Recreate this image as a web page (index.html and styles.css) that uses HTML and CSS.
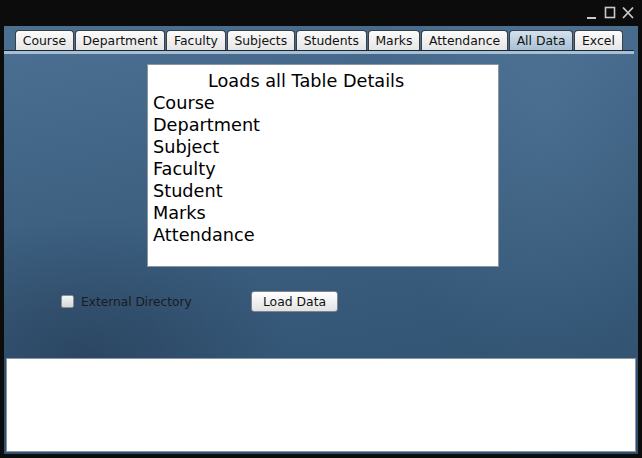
FILE: index.html
```html
<!DOCTYPE html>
<html>
<head>
<meta charset="utf-8">
<link rel="stylesheet" href="styles.css">
</head>
<body>
<div class="titlebar">
  <div class="winctl">
    <svg width="50" height="14" viewBox="0 0 50 14">
      <rect x="1" y="11" width="9" height="2" fill="#c9c9c9"/>
      <rect x="19.5" y="1.5" width="9" height="10" fill="none" stroke="#c9c9c9" stroke-width="1.6"/>
      <path d="M37 1.5 L47 12 M47 1.5 L37 12" stroke="#c9c9c9" stroke-width="1.8"/>
    </svg>
  </div>
</div>
<div class="window">
  <div class="tabs">
    <div class="tab">Course</div>
    <div class="tab">Department</div>
    <div class="tab">Faculty</div>
    <div class="tab">Subjects</div>
    <div class="tab">Students</div>
    <div class="tab">Marks</div>
    <div class="tab">Attendance</div>
    <div class="tab active">All Data</div>
    <div class="tab">Excel</div>
  </div>
  <div class="tabline"></div>
  <div class="content">
    <div class="panel">
      <div class="ptitle">Loads all Table Details</div>
      <div class="pitem">Course</div>
      <div class="pitem">Department</div>
      <div class="pitem">Subject</div>
      <div class="pitem">Faculty</div>
      <div class="pitem">Student</div>
      <div class="pitem">Marks</div>
      <div class="pitem">Attendance</div>
    </div>
    <div class="controls">
      <label class="check"><span class="box"></span><span class="clabel">External Directory</span></label>
      <div class="button">Load Data</div>
    </div>
  </div>
  <div class="output"></div>
</div>
</body>
</html>
```

FILE: styles.css
```css
html, body {
  margin: 0;
  padding: 0;
}
body {
  width: 642px;
  height: 458px;
  background: #0c0c0c;
  font-family: "DejaVu Sans", sans-serif;
  overflow: hidden;
}
.titlebar {
  height: 26px;
  display: flex;
  justify-content: flex-end;
  align-items: flex-start;
}
.winctl {
  padding: 6px 6px 0 0;
  line-height: 0;
}
.window {
  margin: 0 4px;
  height: 428px;
  display: flex;
  flex-direction: column;
  background:
    radial-gradient(ellipse 240px 380px at 540px 80px, rgba(110,150,185,0.22), rgba(110,150,185,0) 70%),
    radial-gradient(ellipse 300px 200px at 80px 330px, rgba(20,35,55,0.35), rgba(20,35,55,0) 70%),
    linear-gradient(170deg, #4b7192 0%, #3f6283 35%, #355777 70%, #2f4e6a 100%);
}
.tabs {
  display: flex;
  gap: 1px;
  padding: 4px 0 0 11px;
  height: 20px;
}
.tab {
  height: 19px;
  padding: 0 6.75px;
  font-size: 12.4px;
  line-height: 19px;
  color: #111;
  border: 1px solid #3a3f45;
  border-bottom: none;
  border-radius: 4px 4px 0 0;
  background: linear-gradient(#fbfbfb, #e6e6e6);
}
.tab.active {
  background: linear-gradient(#d3e1ec, #a9c1d5);
}
.tabline {
  height: 3px;
  margin-right: 4px;
  border-top: 1px solid #18242f;
  background: #a6bfd4;
}
.content {
  flex: 1;
  display: flex;
  flex-direction: column;
}
.panel {
  margin: 10px 0 0 143px;
  width: 345px;
  background: #fff;
  border: 1px solid #8c96a0;
  padding: 5px 0 0 5px;
  height: 196px;
  font-size: 17.7px;
  line-height: 22px;
  color: #000;
}
.ptitle {
  padding-left: 55px;
}
.controls {
  display: flex;
  align-items: center;
  margin-top: 24px;
  height: 21px;
}
.check {
  display: flex;
  align-items: center;
  margin-left: 57px;
  width: 190px;
}
.box {
  width: 11px;
  height: 11px;
  border: 1px solid #8a8f95;
  border-radius: 2px;
  background: linear-gradient(#f6f6f6, #d4d6d8);
  margin-right: 7px;
}
.clabel {
  font-size: 12.2px;
  color: #161c22;
}
.button {
  width: 85px;
  height: 19px;
  border: 1px solid #7d848c;
  border-radius: 3px;
  background: linear-gradient(#ffffff, #e2e2e2);
  font-size: 12.4px;
  line-height: 19px;
  text-align: center;
  color: #111;
}
.output {
  margin: 0 2px 2px 2px;
  height: 92px;
  background: #fff;
  border: 1px solid #8b97a5;
}
```
